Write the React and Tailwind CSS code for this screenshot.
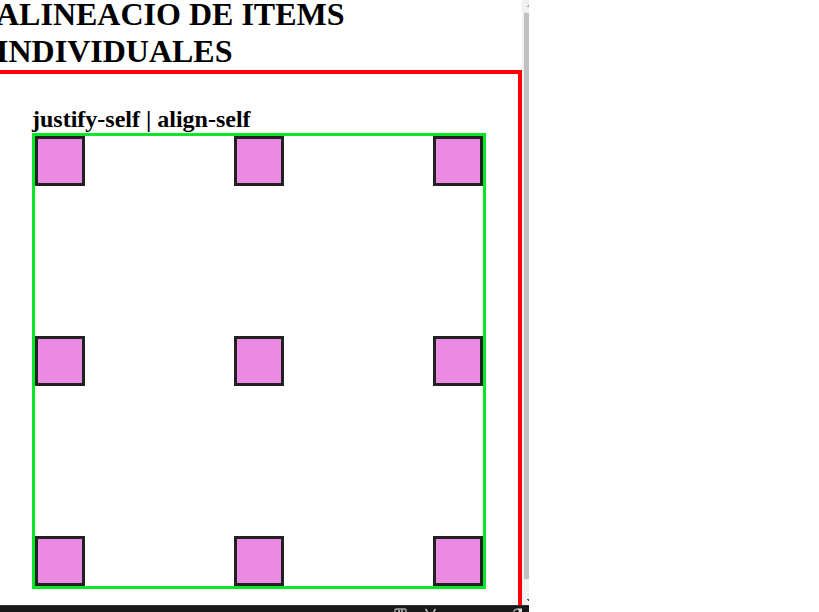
const places = [
  'justify-self-start self-start',
  'justify-self-center self-start',
  'justify-self-end self-start',
  'justify-self-start self-center',
  'justify-self-center self-center',
  'justify-self-end self-center',
  'justify-self-start self-end',
  'justify-self-center self-end',
  'justify-self-end self-end',
];

function Scrollbar() {
  return (
    <div className="flex w-[7px] shrink-0 flex-col items-end justify-between bg-[#f1f1f1]" aria-hidden="true">
      <svg className="h-[13px] w-[2px] shrink-0" viewBox="0 0 2 13">
        <path d="M1 5h1v2H0V6h1z" fill="#a3a3a3" />
      </svg>
      <div className="w-[5px] grow bg-[#c1c1c1]" />
      <svg className="h-[26px] w-[2px] shrink-0" viewBox="0 0 2 26">
        <path d="M0 20h2v2H1v-1H0z" fill="#505050" />
      </svg>
    </div>
  );
}

function Taskbar() {
  return (
    <footer className="flex h-[7px] shrink-0 items-end justify-end border-t border-[#303030] bg-[#191919]">
      <svg className="h-[4px] w-[135px]" viewBox="0 0 135 4" fill="none" aria-hidden="true">
        <path d="M1 4V2l1-1h9l1 1v2" stroke="#a9a9a9" strokeWidth="1.5" />
        <path d="M4 3h2M7 3h2" stroke="#d0d0d0" strokeWidth="1.5" />
        <path d="M31.500 1l2 3M41.500 1l-2 3" stroke="#c8c8c8" strokeWidth="1.500" />
        <path d="M120 4q0-3 4-3h4" stroke="#a0a0a0" strokeWidth="1.5" />
        <path d="M124 1h4v3h-3z" fill="#dddddd" />
      </svg>
    </footer>
  );
}

export default function App() {
  return (
    <div className="flex h-screen w-full max-w-[529px] flex-col overflow-hidden bg-white font-['Liberation_Serif',serif] text-black">
      <div className="flex min-h-0 grow">
        <main className="-mt-1 flex min-w-0 grow flex-col overflow-hidden">
          <h1 className="-ml-1 max-w-[400px] shrink-0 text-[32px] leading-[37px] font-bold">
            ALINEACIO DE ITEMS INDIVIDUALES
          </h1>
          <section className="grow border-t-4 border-r-4 border-[#ff0000] px-8 pt-8">
            <h2 className="text-[24px] leading-[27px] font-bold">justify-self | align-self</h2>
            <div className="grid h-[456px] grid-cols-3 grid-rows-3 border-3 border-[#06e828]">
              {places.map((place) => (
                <div key={place} className={`size-[50px] border-3 border-[#212121] bg-[#eb8ae3] ${place}`} />
              ))}
            </div>
          </section>
        </main>
        <Scrollbar />
      </div>
      <Taskbar />
    </div>
  );
}
